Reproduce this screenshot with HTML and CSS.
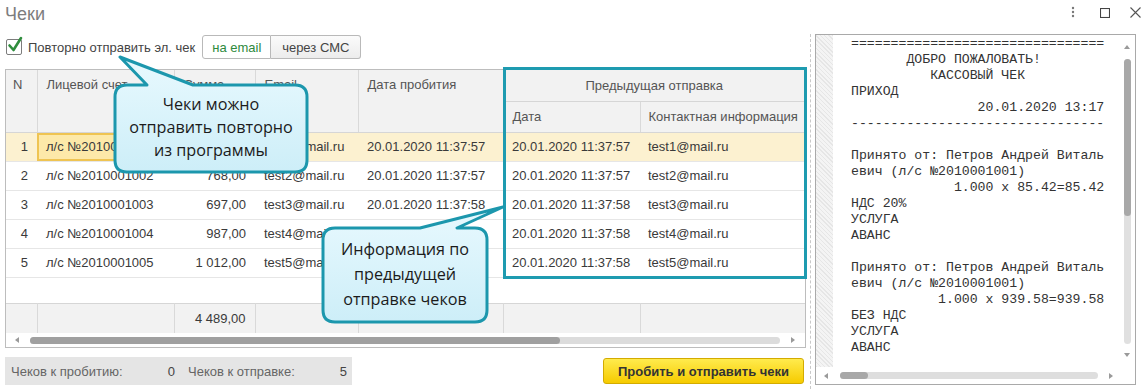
FILE: index.html
```html
<!DOCTYPE html>
<html lang="ru">
<head>
<meta charset="utf-8">
<title>Чеки</title>
<link rel="stylesheet" href="styles.css">
</head>
<body>
<div class="window">
  <header class="titlebar">
    <h1 class="title">Чеки</h1>
    <div class="winctl">
      <svg class="ic-dots" width="4" height="12" viewBox="0 0 4 12"><circle cx="2" cy="2" r="1.2"/><circle cx="2" cy="6" r="1.2"/><circle cx="2" cy="10" r="1.2"/></svg>
      <svg class="ic-max" width="10" height="10" viewBox="0 0 10 10"><rect x="0.5" y="0.5" width="9" height="9" fill="none" stroke="#444" stroke-width="1.1"/></svg>
      <svg class="ic-close" width="11" height="11" viewBox="0 0 11 11"><path d="M0.5 0.5 L10.5 10.5 M10.5 0.5 L0.5 10.5" stroke="#555" stroke-width="1.1"/></svg>
    </div>
  </header>

  <div class="main">
    <section class="left">
      <div class="toolbar">
        <label class="check">
          <span class="box"><svg width="17" height="17" viewBox="0 0 17 17"><path d="M3.5 8.5 L7.5 13 L15 1" fill="none" stroke="#2f8d3d" stroke-width="2.6" stroke-linecap="round" stroke-linejoin="round"/></svg></span>
          <span>Повторно отправить эл. чек</span>
        </label>
        <div class="seg">
          <button class="seg-btn on">на email</button>
          <button class="seg-btn">через СМС</button>
        </div>
      </div>

      <div class="grid">
        <table class="tbl">
          <colgroup>
            <col class="c-n"><col class="c-acc"><col class="c-sum"><col class="c-mail"><col class="c-date"><col class="c-pdate"><col class="c-contact">
          </colgroup>
          <thead>
            <tr class="h1">
              <th rowspan="2" class="tall n">N</th>
              <th rowspan="2" class="tall">Лицевой счет</th>
              <th rowspan="2" class="tall">Сумма</th>
              <th rowspan="2" class="tall">Email</th>
              <th rowspan="2" class="tall">Дата пробития</th>
              <th colspan="2" class="group">Предыдущая отправка</th>
            </tr>
            <tr class="h2">
              <th>Дата</th>
              <th class="last">Контактная информация</th>
            </tr>
          </thead>
          <tbody>
            <tr class="sel">
              <td class="num">1</td><td class="cur">л/с №2010001001</td><td class="num">854,00</td><td>test1@mail.ru</td><td>20.01.2020 11:37:57</td><td>20.01.2020 11:37:57</td><td class="ct">test1@mail.ru</td>
            </tr>
            <tr>
              <td class="num">2</td><td>л/с №2010001002</td><td class="num">768,00</td><td>test2@mail.ru</td><td>20.01.2020 11:37:57</td><td>20.01.2020 11:37:57</td><td class="ct">test2@mail.ru</td>
            </tr>
            <tr>
              <td class="num">3</td><td>л/с №2010001003</td><td class="num">697,00</td><td>test3@mail.ru</td><td>20.01.2020 11:37:58</td><td>20.01.2020 11:37:58</td><td class="ct">test3@mail.ru</td>
            </tr>
            <tr>
              <td class="num">4</td><td>л/с №2010001004</td><td class="num">987,00</td><td>test4@mail.ru</td><td>20.01.2020 11:37:58</td><td>20.01.2020 11:37:58</td><td class="ct">test4@mail.ru</td>
            </tr>
            <tr>
              <td class="num">5</td><td>л/с №2010001005</td><td class="num">1 012,00</td><td>test5@mail.ru</td><td>20.01.2020 11:37:58</td><td>20.01.2020 11:37:58</td><td class="ct">test5@mail.ru</td>
            </tr>
            <tr class="filler"><td colspan="7"></td></tr>
          </tbody>
          <tfoot>
            <tr>
              <td></td><td></td><td class="num">4 489,00</td><td></td><td></td><td></td><td class="last"></td>
            </tr>
          </tfoot>
        </table>
        <div class="hscroll">
          <svg class="arr" width="4" height="6" viewBox="0 0 4 6"><path d="M4 0 L0 3 L4 6 Z"/></svg>
          <div class="track"><div class="thumb"></div></div>
          <svg class="arr" width="4" height="6" viewBox="0 0 4 6"><path d="M0 0 L4 3 L0 6 Z"/></svg>
        </div>
      </div>

      <div class="bottom">
        <div class="stats">
          <div class="stat"><span>Чеков к пробитию:</span><span class="val">0</span></div>
          <div class="stat s2"><span>Чеков к отправке:</span><span class="val">5</span></div>
        </div>
        <button class="primary">Пробить и отправить чеки</button>
      </div>
    </section>

    <div class="sep"></div>

    <section class="receipt">
      <div class="rc-main">
        <div class="rc-strip"></div>
        <div class="rc-text"><pre>================================
       ДОБРО ПОЖАЛОВАТЬ!
          КАССОВЫЙ ЧЕК
ПРИХОД
                20.01.2020 13:17
--------------------------------

Принято от: Петров Андрей Виталь
евич (л/с №2010001001)
             1.000 x 85.42=85.42
НДС 20%
УСЛУГА
АВАНС

Принято от: Петров Андрей Виталь
евич (л/с №2010001001)
           1.000 x 939.58=939.58
БЕЗ НДС
УСЛУГА
АВАНС</pre></div>
        <div class="vscroll">
          <svg class="arr" width="6" height="4" viewBox="0 0 6 4"><path d="M0 4 L3 0 L6 4 Z"/></svg>
          <div class="vtrack"><div class="vthumb"></div></div>
          <svg class="arr" width="6" height="4" viewBox="0 0 6 4"><path d="M0 0 L3 4 L6 0 Z"/></svg>
        </div>
      </div>
      <div class="rc-hscroll">
        <svg class="arr" width="4" height="6" viewBox="0 0 4 6"><path d="M4 0 L0 3 L4 6 Z"/></svg>
        <div class="rtrack"><div class="rthumb"></div></div>
        <svg class="arr" width="4" height="6" viewBox="0 0 4 6"><path d="M0 0 L4 3 L0 6 Z"/></svg>
      </div>
    </section>
  </div>

  <!-- overlays -->
  <div class="highlight"></div>
  <svg class="callouts" width="1144" height="389" viewBox="0 0 1144 389">
    <defs>
      <linearGradient id="cg" x1="0" y1="0" x2="0" y2="1">
        <stop offset="0" stop-color="#e8f9fe"/>
        <stop offset="1" stop-color="#cdeef8"/>
      </linearGradient>
    </defs>
    <path d="M127 85 L147 85 L120 57 L193 85 L295 85 Q307 85 307 97 L307 160 Q307 172 295 172 L127 172 Q115 172 115 160 L115 97 Q115 85 127 85 Z" fill="url(#cg)" stroke="#1c97ad" stroke-width="3" stroke-linejoin="round"/>
    <path d="M335 228 L420 228 L503 207 L457 228 L475 228 Q487 228 487 240 L487 310 Q487 322 475 322 L335 322 Q323 322 323 310 L323 240 Q323 228 335 228 Z" fill="url(#cg)" stroke="#1c97ad" stroke-width="3" stroke-linejoin="round"/>
  </svg>
  <div class="note note1">Чеки можно<br>отправить повторно<br>из программы</div>
  <div class="note note2">Информация по<br>предыдущей<br>отправке чеков</div>
</div>
</body>
</html>
```

FILE: styles.css
```css
* { box-sizing: border-box; }

html, body {
  margin: 0;
  padding: 0;
  background: #fff;
}

.window {
  position: relative;
  width: 1144px;
  height: 389px;
  overflow: hidden;
  font-family: "Liberation Sans", Arial, sans-serif;
  font-size: 13px;
  color: #333;
  background: #fff;
}

/* title bar */
.titlebar {
  display: flex;
  justify-content: space-between;
  height: 34px;
  padding-left: 5px;
}
.title {
  margin: 0;
  padding-top: 2px;
  font-weight: normal;
  font-size: 18px;
  line-height: 24px;
  color: #7d7d7d;
}
.winctl {
  display: flex;
  align-items: flex-start;
  padding-top: 6px;
  padding-right: 3px;
}
.ic-dots { fill: #777; margin-top: 0; }
.ic-max { margin-left: 25px; margin-top: 2px; }
.ic-close { margin-left: 20px; margin-top: 1px; }

/* main area */
.main {
  display: flex;
  height: 355px;
}
.left {
  width: 801px;
  margin-left: 5px;
  display: flex;
  flex-direction: column;
}
.sep {
  margin-left: 4px;
  border-left: 1px dashed #c9c9c9;
}

/* toolbar */
.toolbar {
  display: flex;
  align-items: center;
  height: 24px;
  margin-top: 1px;
}
.check {
  display: flex;
  align-items: center;
  gap: 6px;
  margin-left: 1px;
  color: #444;
}
.box {
  width: 16px;
  height: 16px;
  border: 1px solid #7c7c7c;
  border-radius: 2px;
  background: #fff;
  position: relative;
}
.box svg {
  position: absolute;
  left: -1px;
  top: -3px;
  overflow: visible;
}
.seg {
  display: flex;
  margin-left: 7px;
  height: 24px;
}
.seg-btn {
  font: inherit;
  font-size: 13px;
  height: 24px;
  margin: 0;
  border: 1px solid #b9b9b9;
  background: linear-gradient(#fbfbfb, #ececec);
  color: #444;
  padding: 0;
  width: 90px;
  border-radius: 0 3px 3px 0;
  border-left: none;
}
.seg-btn.on {
  width: 69px;
  background: #fff;
  color: #2e8a3e;
  border-left: 1px solid #b9b9b9;
  border-radius: 3px 0 0 3px;
}

/* grid */
.grid {
  margin-top: 10px;
  border: 1px solid #bdbdbd;
}
.tbl {
  border-collapse: collapse;
  table-layout: fixed;
  width: 799px;
}
.c-n { width: 31px; }
.c-acc { width: 137px; }
.c-sum { width: 81px; }
.c-mail { width: 103px; }
.c-date { width: 145px; }
.c-pdate { width: 137px; }
.c-contact { width: 165px; }

.tbl th {
  font-weight: normal;
  color: #555;
  background: #f2f2f2;
  text-align: left;
  border-right: 1px solid #d9d9d9;
  border-bottom: 1px solid #d6d6d6;
  padding: 0 9px;
  white-space: nowrap;
  overflow: hidden;
}
.tbl th.tall {
  vertical-align: top;
  padding-top: 7px;
}
.tbl th.n { padding-left: 7px; }
.tbl th.group { text-align: center; border-right: none; }
.tbl th.last { border-right: none; padding-left: 8px; }
.tbl tr.h1 { height: 31px; }
.tbl tr.h2 { height: 31px; }

.tbl tbody tr { height: 29px; }
.tbl td {
  padding: 0 9px;
  white-space: nowrap;
  overflow: hidden;
  color: #3a3a3a;
}
.tbl tbody td { border-bottom: 1px solid #e6e6e6; }
.tbl td.num { text-align: right; }
.tbl td.ct { padding-left: 8px; }
.tbl tr.sel td { background: #fcf1d0; }
.tbl tr.sel td.cur {
  background: #fde9a9;
  box-shadow: inset 0 0 0 2px #efc452;
}
.tbl tr.filler { height: 26px; }
.tbl tr.filler td { border-bottom: none; }

.tbl tfoot tr { height: 30px; }
.tbl tfoot td {
  background: #f2f2f2;
  border-top: 1px solid #d6d6d6;
  border-right: 1px solid #d9d9d9;
}
.tbl tfoot td.last { border-right: none; }

.hscroll {
  height: 14px;
  display: flex;
  align-items: center;
  padding-left: 9px;
}
.arr { fill: #9a9a9a; flex: none; }
.track {
  width: 750px;
  height: 7px;
  margin-left: 11px;
  margin-right: 11px;
  border-radius: 4px;
  background: #dcdcdc;
}
.thumb {
  width: 530px;
  height: 7px;
  border-radius: 4px;
  background: #a0a0a0;
}

/* bottom row */
.bottom {
  display: flex;
  justify-content: space-between;
  align-items: flex-start;
  margin-top: 9px;
}
.stats {
  display: flex;
  width: 347px;
  height: 28px;
  align-items: center;
  padding-left: 6px;
  background: #e5e5e5;
  color: #666;
}
.stat {
  display: flex;
  justify-content: space-between;
  width: 164px;
}
.stat.s2 {
  width: 159px;
  margin-left: 13px;
}
.stat .val { color: #444; }
.primary {
  font: inherit;
  font-size: 13px;
  font-weight: bold;
  color: #333;
  width: 201px;
  height: 26px;
  margin: 1px 2px 0 0;
  padding: 0;
  border: 1px solid #d3ab00;
  border-radius: 3px;
  background: linear-gradient(#ffeb4d, #f6cb00);
}

/* receipt pane */
.receipt {
  margin-left: 4px;
  width: 321px;
  height: 351px;
  border: 1px solid #a9a9a9;
  display: flex;
  flex-direction: column;
  background: #fff;
}
.rc-main {
  display: flex;
  height: 332px;
}
.rc-strip {
  width: 17px;
  background-color: #f4f4f4;
  background-image: repeating-linear-gradient(45deg, #e6e6e6 0 1px, transparent 1px 3px);
}
.rc-text {
  flex: 1;
  overflow: hidden;
  padding-left: 18px;
  padding-top: 1px;
}
.rc-text pre {
  margin: 0;
  font-family: "Liberation Mono", "Courier New", monospace;
  font-size: 13.2px;
  line-height: 16px;
  color: #333;
}
.vscroll {
  width: 16px;
  display: flex;
  flex-direction: column;
  align-items: center;
  padding-top: 10px;
}
.vtrack {
  width: 7px;
  height: 285px;
  margin-top: 10px;
  border-radius: 4px;
  background: #e0e0e0;
}
.vthumb {
  width: 7px;
  height: 157px;
  border-radius: 4px;
  background: #a8a8a8;
}
.vscroll .arr:last-child { margin-top: 9px; }

.rc-hscroll {
  height: 17px;
  display: flex;
  align-items: center;
  padding-left: 8px;
}
.rtrack {
  width: 258px;
  height: 7px;
  margin-left: 12px;
  margin-right: 11px;
  border-radius: 4px;
  background: #dedede;
}
.rthumb {
  width: 28px;
  height: 7px;
  border-radius: 4px;
  background: #a8a8a8;
}

/* overlays */
.highlight {
  position: absolute;
  left: 503px;
  top: 67px;
  width: 304px;
  height: 212px;
  border: 3px solid #1e9bb0;
}
.callouts {
  position: absolute;
  left: 0;
  top: 0;
  pointer-events: none;
}
.note {
  position: absolute;
  text-align: center;
  font-family: "Open Sans", "Noto Sans", sans-serif;
  font-size: 16.2px;
  color: #1b1b1b;
}
.note1 {
  left: 115px;
  top: 93px;
  width: 192px;
  line-height: 23px;
}
.note2 {
  left: 323px;
  top: 237px;
  width: 164px;
  line-height: 25px;
}
```
